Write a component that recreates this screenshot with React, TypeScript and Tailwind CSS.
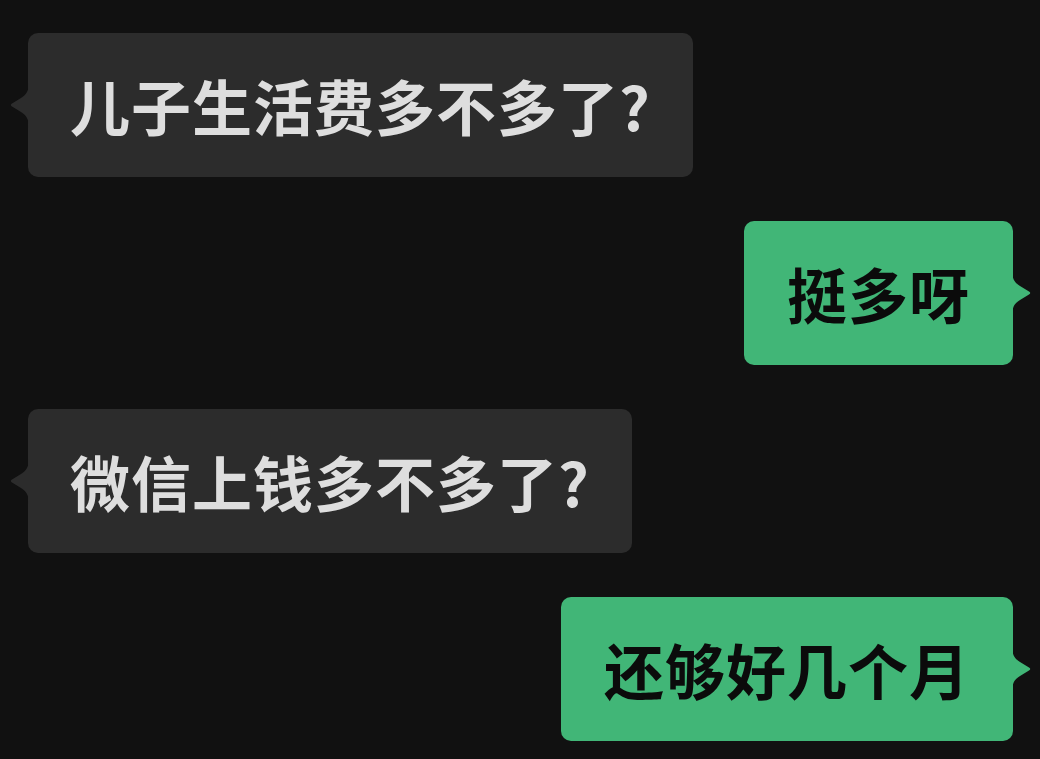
const messages: { text: string; mine: boolean }[] = [
  { text: "儿子生活费多不多了?", mine: false },
  { text: "挺多呀", mine: true },
  { text: "微信上钱多不多了?", mine: false },
  { text: "还够好几个月", mine: true },
];

function Tail({ side, color }: { side: "left" | "right"; color: string }) {
  // drawn pointing right; mirrored for the left side
  return (
    <svg
      width="20"
      height="46"
      viewBox="0 0 20 46"
      aria-hidden
      className={side === "left" ? "-scale-x-100 -mr-px shrink-0" : "-ml-px shrink-0"}
    >
      <path d="M0 0 C0 9 3 13 8 16 L17 21.5 Q19.5 23 17 24.5 L8 30 C3 33 0 37 0 46 Z" fill={color} />
    </svg>
  );
}

function Bubble({ text, mine }: { text: string; mine: boolean }) {
  const bg = mine ? "#41b677" : "#2c2c2c";
  return (
    <div className={`flex items-center ${mine ? "justify-end" : "justify-start -ml-[18px]"}`}>
      {!mine && <Tail side="left" color={bg} />}
      <div
        className={`flex h-[144px] items-center rounded-[10px] text-[60px] font-bold leading-none tracking-[1px] ${
          mine ? "bg-[#41b677] px-[43px] text-[#0b0b0b]" : "bg-[#2c2c2c] pl-[42px] pr-[42px] text-[#dedede]"
        }`}
      >
        {text}
      </div>
      {mine && <Tail side="right" color={bg} />}
    </div>
  );
}

export default function App() {
  return (
    <div
      className="flex h-[759px] w-[1040px] flex-col gap-[44px] overflow-hidden bg-[#111111] pl-[27px] pr-[8px] pt-[33px]"
      style={{ fontFamily: '"Noto Sans CJK SC", "Noto Sans", sans-serif' }}
    >
      {messages.map((m, i) => (
        <Bubble key={i} {...m} />
      ))}
    </div>
  );
}
